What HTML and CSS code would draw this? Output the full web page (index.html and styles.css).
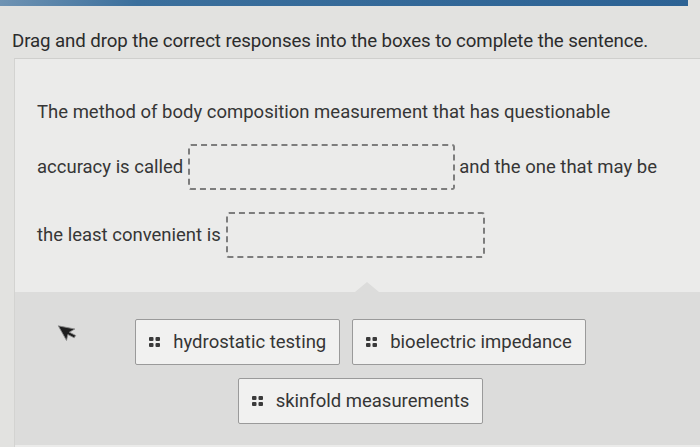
FILE: index.html
```html
<!DOCTYPE html>
<html lang="en">
<head>
<meta charset="utf-8">
<title>Drag and drop</title>
<link rel="stylesheet" href="styles.css">
</head>
<body>
<div class="topbar"></div>
<h1 class="prompt">Drag and drop the correct responses into the boxes to complete the sentence.</h1>
<section class="panel">
  <div class="sentence">
    <div class="line line-1"><span>The method of body composition measurement that has questionable</span></div>
    <div class="line line-2"><span>accuracy is called</span><span class="drop drop-1"></span><span>and the one that may be</span></div>
    <div class="line line-3"><span>the least convenient is</span><span class="drop drop-2"></span></div>
  </div>
  <div class="bank">
    <div class="chip-row">
      <div class="chip"><svg class="grip" viewBox="0 0 11 10" width="11" height="10"><rect x="0" y="0" width="4.5" height="4" rx="1"/><rect x="6.5" y="0" width="4.5" height="4" rx="1"/><rect x="0" y="6" width="4.5" height="4" rx="1"/><rect x="6.5" y="6" width="4.5" height="4" rx="1"/></svg><span>hydrostatic testing</span></div>
      <div class="chip"><svg class="grip" viewBox="0 0 11 10" width="11" height="10"><rect x="0" y="0" width="4.5" height="4" rx="1"/><rect x="6.5" y="0" width="4.5" height="4" rx="1"/><rect x="0" y="6" width="4.5" height="4" rx="1"/><rect x="6.5" y="6" width="4.5" height="4" rx="1"/></svg><span>bioelectric impedance</span></div>
    </div>
    <div class="chip-row">
      <div class="chip"><svg class="grip" viewBox="0 0 11 10" width="11" height="10"><rect x="0" y="0" width="4.5" height="4" rx="1"/><rect x="6.5" y="0" width="4.5" height="4" rx="1"/><rect x="0" y="6" width="4.5" height="4" rx="1"/><rect x="6.5" y="6" width="4.5" height="4" rx="1"/></svg><span>skinfold measurements</span></div>
    </div>
    <svg class="pointer" viewBox="0 0 18 20" width="18" height="20"><path d="M1 1 L6 17 L8.5 11.5 L14 16 L16 14 L10.5 9.5 L16.5 7.5 Z" fill="#1e1e1e" stroke="#8a8a8a" stroke-width="0.8" stroke-linejoin="round"/></svg>
  </div>
</section>
</body>
</html>
```

FILE: styles.css
```css
* {
  box-sizing: border-box;
}

body {
  margin: 0;
  background: #e2e2e0;
  font-family: Roboto, "Liberation Sans", Arial, sans-serif;
  color: #353535;
  width: 700px;
  height: 447px;
  overflow: hidden;
}

.topbar {
  height: 6px;
  width: 688px;
  background: linear-gradient(90deg, #6f93b3 0%, #3b6f9c 20%, #2c6294 100%);
}

.prompt {
  margin: 0;
  padding: 22px 0 0 12px;
  font-size: 18.7px;
  font-weight: 400;
  line-height: 26px;
  color: #2c2c2c;
  letter-spacing: -0.1px;
}

.panel {
  margin: 4px 0 0 14px;
  border-top: 1px solid #cfcfcd;
  border-left: 1px solid #d3d3d1;
  background: #ebebea;
  height: 400px;
}

.sentence {
  padding: 30px 0 34px 22px;
  font-size: 18.5px;
  color: #363636;
}

.line {
  display: flex;
  align-items: center;
  min-height: 46px;
}

.line-2 {
  margin-top: 9px;
}

.line-3 {
  margin-top: 22px;
}

.drop {
  width: 267px;
  height: 46px;
  border: 2px dashed #7d7d7d;
  border-radius: 3px;
  margin: 0 4px 0 5px;
}

.drop-2 {
  width: 259px;
}

.bank {
  position: relative;
  background: #dcdcdb;
  padding: 27px 0 20px;
  display: flex;
  flex-direction: column;
  align-items: center;
  gap: 13px;
  height: 153px;
}

.bank::before {
  content: "";
  position: absolute;
  top: -10px;
  left: 340px;
  border-left: 12px solid transparent;
  border-right: 12px solid transparent;
  border-bottom: 10px solid #dcdcdb;
}

.chip-row {
  display: flex;
  gap: 12px;
  padding-left: 6px;
}

.chip {
  display: flex;
  align-items: center;
  gap: 13px;
  height: 46px;
  padding: 0 13px;
  background: #f1f1f0;
  border: 1px solid #9a9a9a;
  border-radius: 2px;
  font-size: 18.5px;
  color: #353535;
}

.grip {
  fill: #3a3a3a;
  flex: none;
}

.pointer {
  position: absolute;
  left: 44px;
  top: 31px;
  transform: rotate(-12deg);
}
```
